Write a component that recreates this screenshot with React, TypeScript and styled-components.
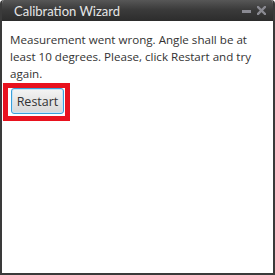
import styled, { createGlobalStyle } from "styled-components";

const GlobalStyle = createGlobalStyle`
  html, body {
    margin: 0;
    padding: 0;
    background: #fff;
  }
  * {
    box-sizing: border-box;
  }
`;

export default function App() {
  return (
    <>
      <GlobalStyle />
      <Window>
        <TitleBar>
          <Title>Calibration Wizard</Title>
          <Controls>
            <svg width="9" height="9" viewBox="0 0 9 9">
              <rect x="0" y="4" width="9" height="3" fill="#8a8a92" />
            </svg>
            <svg width="9" height="9" viewBox="0 0 9 9">
              <path
                d="M1 1 L8 8 M8 1 L1 8"
                stroke="#8a8a92"
                strokeWidth="2.4"
                strokeLinecap="square"
              />
            </svg>
          </Controls>
        </TitleBar>
        <Body>
          <Message>
            Measurement went wrong. Angle shall be at least 10 degrees.
            Please, click Restart and try again.
          </Message>
          <Highlight>
            <Button>Restart</Button>
          </Highlight>
        </Body>
      </Window>
    </>
  );
}

const Window = styled.div`
  width: 275px;
  height: 275px;
  display: flex;
  flex-direction: column;
  background: #fff;
  border: 2px solid #3a3a3a;
  border-top: none;
  border-radius: 4px 4px 0 0;
  overflow: hidden;
`;

const TitleBar = styled.div`
  height: 21px;
  flex-shrink: 0;
  margin: 0 -2px;
  display: flex;
  align-items: center;
  justify-content: space-between;
  padding: 0 9px 0 14px;
  background: linear-gradient(#575757, #3b3b3b 45%, #2c2c2c);
  border-radius: 4px 4px 0 0;
`;

const Title = styled.span`
  font-family: "Lato", "Open Sans", sans-serif;
  font-size: 13px;
  color: #e6e6e6;
  padding-top: 1px;
`;

const Controls = styled.div`
  display: flex;
  align-items: center;
  gap: 6px;
`;

const Body = styled.div`
  display: flex;
  flex-direction: column;
  align-items: flex-start;
  padding: 10px 8px 0 8px;
`;

const Message = styled.p`
  margin: 0;
  font-family: "Open Sans", "Noto Sans", sans-serif;
  font-size: 11.6px;
  line-height: 17px;
  color: #333;
`;

const Highlight = styled.div`
  margin: 1px 0 0 -7px;
  border: 5px solid #e8121e;
  padding: 0 1px 2px 3px;
`;

const Button = styled.button`
  width: 53px;
  height: 26px;
  padding: 0;
  font-family: "Open Sans", "Noto Sans", sans-serif;
  font-size: 12.5px;
  color: #333;
  background: linear-gradient(#f4f4f4, #e4e4e4 55%, #d8d8d8);
  border: 1px solid #3ba0da;
  border-radius: 3px;
  box-shadow: inset 0 0 0 1px #c7e4f6;
  cursor: pointer;
`;
